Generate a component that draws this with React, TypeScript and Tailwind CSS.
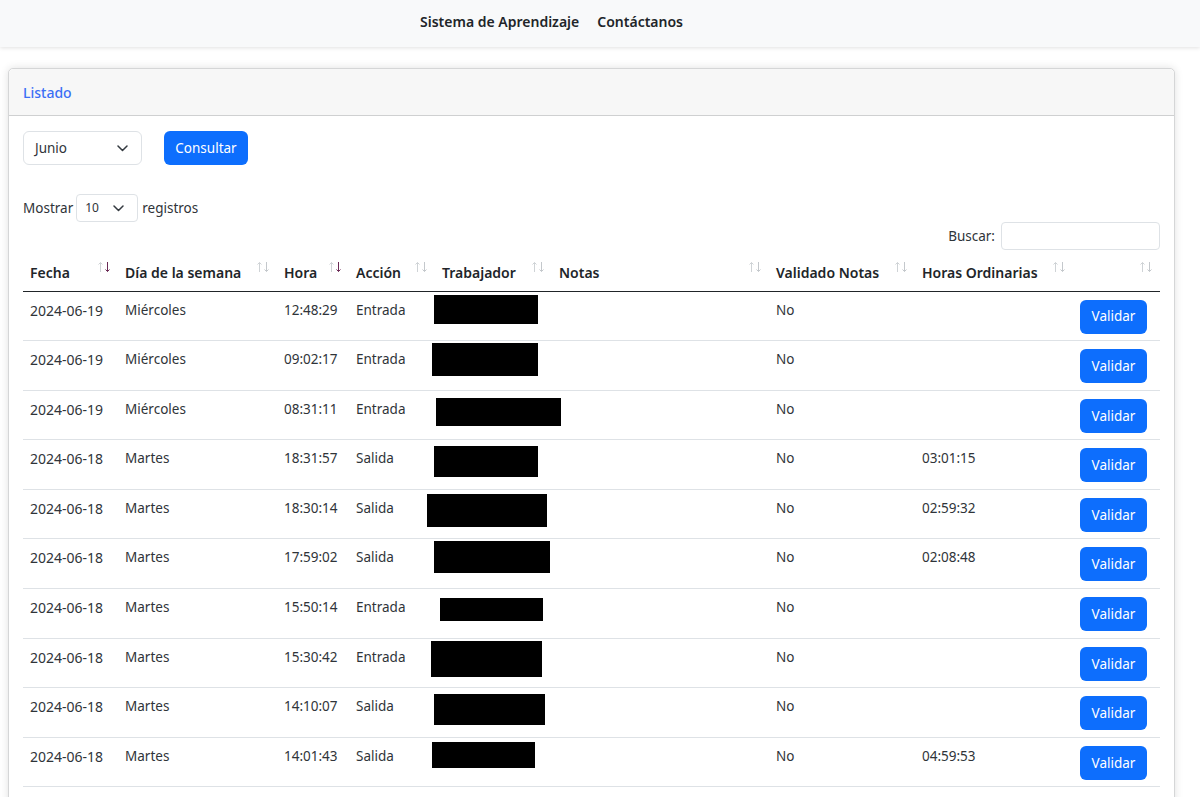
const meses = 'Junio'

const headers = [
  { label: 'Fecha', width: 'w-[95px]', active: true },
  { label: 'Día de la semana', width: 'w-[159px]' },
  { label: 'Hora', width: 'w-[72px]', active: true },
  { label: 'Acción', width: 'w-[86px]' },
  { label: 'Trabajador', width: 'w-[117px]' },
  { label: 'Notas', width: 'w-[217px]' },
  { label: 'Validado Notas', width: 'w-[146px]' },
  { label: 'Horas Ordinarias', width: 'w-[158px]' },
  { label: '', width: 'w-[87px]' },
]

const rows = [
  { fecha: '2024-06-19', dia: 'Miércoles', hora: '12:48:29', accion: 'Entrada', horas: '', black: 'left-[-1px] top-[3px] w-[104px] h-[29px]' },
  { fecha: '2024-06-19', dia: 'Miércoles', hora: '09:02:17', accion: 'Entrada', horas: '', black: 'left-[-3px] top-[2px] w-[106px] h-[33px]' },
  { fecha: '2024-06-19', dia: 'Miércoles', hora: '08:31:11', accion: 'Entrada', horas: '', black: 'left-[1px] top-[7px] w-[125px] h-[28px]' },
  { fecha: '2024-06-18', dia: 'Martes', hora: '18:31:57', accion: 'Salida', horas: '03:01:15', black: 'left-[-1px] top-[6px] w-[104px] h-[31px]' },
  { fecha: '2024-06-18', dia: 'Martes', hora: '18:30:14', accion: 'Salida', horas: '02:59:32', black: 'left-[-8px] top-[4px] w-[120px] h-[33px]' },
  { fecha: '2024-06-18', dia: 'Martes', hora: '17:59:02', accion: 'Salida', horas: '02:08:48', black: 'left-[-1px] top-[2px] w-[116px] h-[32px]' },
  { fecha: '2024-06-18', dia: 'Martes', hora: '15:50:14', accion: 'Entrada', horas: '', black: 'left-[5px] top-[9px] w-[103px] h-[23px]' },
  { fecha: '2024-06-18', dia: 'Martes', hora: '15:30:42', accion: 'Entrada', horas: '', black: 'left-[-4px] top-[2px] w-[111px] h-[36px]' },
  { fecha: '2024-06-18', dia: 'Martes', hora: '14:10:07', accion: 'Salida', horas: '', black: 'left-[-1px] top-[6px] w-[111px] h-[31px]' },
  { fecha: '2024-06-18', dia: 'Martes', hora: '14:01:43', accion: 'Salida', horas: '04:59:53', black: 'left-[-3px] top-[4px] w-[103px] h-[26px]' },
]

const SortArrows = ({ active }: { active?: boolean }) => (
  <svg className="absolute right-[7px] top-[4px]" width="14" height="12" viewBox="0 0 14 12" fill="none" strokeWidth="1">
    <path d="M3.5 11V1.5M1.5 3.5l2-2 2 2" stroke="#cfd3d6" />
    <path d="M10.5 1v9.5M8.5 8.5l2 2 2-2" stroke={active ? '#6b2a55' : '#c4c8cc'} />
  </svg>
)

const Chevron = () => (
  <svg width="11" height="7" viewBox="0 0 11 7" fill="none">
    <path d="M1 1l4.5 4.5L10 1" stroke="#343a40" strokeWidth="1.5" strokeLinecap="round" strokeLinejoin="round" />
  </svg>
)

const App = () => {
  return (
    <div className="h-[797px] overflow-hidden bg-white text-[13.5px] text-[#2f3439] font-['Noto_Sans',sans-serif]">
      {/* Navbar */}
      <nav className="h-[47px] bg-[#f8f9fa] shadow-[0_1px_4px_rgba(0,0,0,0.12)] flex items-center justify-center gap-[18px] text-[14px] text-[#212529] font-semibold pb-[5px] pr-[97px]">
        <a>Sistema de Aprendizaje</a>
        <a>Contáctanos</a>
      </nav>

      <div className="pt-[21px] pl-[8px] pr-[25px]">
        <div className="border border-[#d5d6d7] rounded-[5px] shadow-[0_0_8px_rgba(0,0,0,0.12)] bg-white pb-[40px]">
          {/* Card header */}
          <div className="h-[47px] bg-[#f7f7f7] border-b border-[#cfd0d1] rounded-t-[5px] flex items-center px-[14px] text-[14px] font-medium text-[#3b6ff5]">
            Listado
          </div>

          <div className="px-[14px] pt-[15px]">
            {/* Month filter */}
            <div className="flex items-start gap-[22px]">
              <div className="w-[119px] h-[34px] border border-[#dee2e6] rounded-[6px] flex items-center justify-between pl-[11px] pr-[13px]">
                <span>{meses}</span>
                <Chevron />
              </div>
              <button className="h-[34px] w-[84px] bg-[#0d6efd] text-white rounded-[6px]">Consultar</button>
            </div>

            {/* Page length */}
            <div className="flex items-center gap-[3px] mt-[29px] h-[28px]">
              <span>Mostrar</span>
              <div className="w-[62px] h-[28px] border border-[#dee2e6] rounded-[4px] flex items-center justify-between pl-[8px] pr-[13px] text-[12px]">
                <span>10</span>
                <Chevron />
              </div>
              <span className="ml-[1px]">registros</span>
            </div>

            {/* Search */}
            <div className="flex items-center justify-end gap-[6px] h-[28px]">
              <span>Buscar:</span>
              <div className="w-[159px] h-[28px] border border-[#dee2e6] rounded-[4px]"></div>
            </div>

            <table className="table-fixed w-[1137px] border-collapse mt-[7px]">
              <thead>
                <tr className="h-[34px] border-b border-[#212529]">
                  {headers.map((h, i) => (
                    <th key={i} className={`${h.width} relative text-left text-[14px] text-[#212529] font-semibold px-[7px] pb-[3px]`}>
                      {h.label}
                      <SortArrows active={h.active} />
                    </th>
                  ))}
                </tr>
              </thead>
              <tbody>
                {rows.map((r, i) => (
                  <tr key={i} className="h-[49.6px] border-b border-[#dee2e6]">
                    <td className="px-[7px] align-top pt-[8px] text-[14px]">{r.fecha}</td>
                    <td className="px-[7px] align-top pt-[8px]">{r.dia}</td>
                    <td className="px-[7px] align-top pt-[8px]">{r.hora}</td>
                    <td className="px-[7px] align-top pt-[8px]">{r.accion}</td>
                    <td className="relative px-0 align-top">
                      <div className={`absolute bg-black ${r.black}`}></div>
                    </td>
                    <td></td>
                    <td className="px-[7px] align-top pt-[8px]">No</td>
                    <td className="px-[7px] align-top pt-[8px]">{r.horas}</td>
                    <td className="px-[7px] align-top pt-[8px]">
                      <button className="h-[34px] w-[67px] bg-[#0d6efd] text-white rounded-[6px]">Validar</button>
                    </td>
                  </tr>
                ))}
              </tbody>
            </table>
          </div>
        </div>
      </div>
    </div>
  )
}

export default App
